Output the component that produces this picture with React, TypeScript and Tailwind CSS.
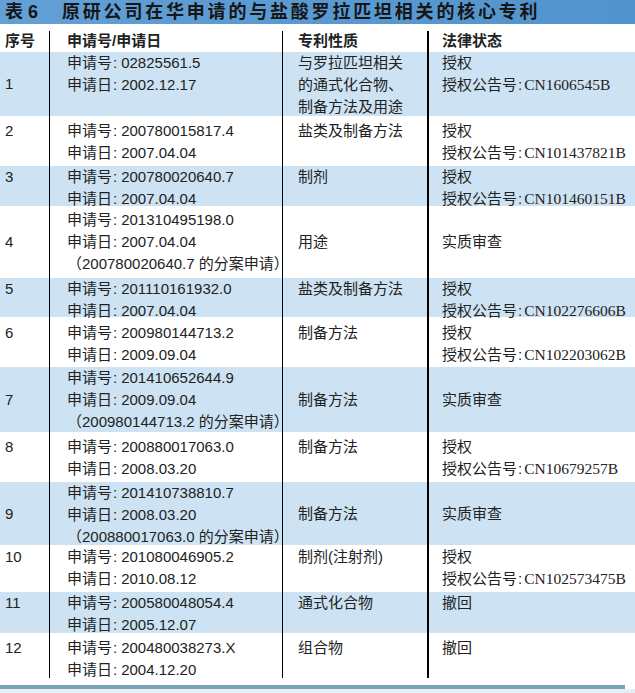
import React from "react";

type Row = {
  no: string;
  h: string;
  pt: string;
  blue: boolean;
  labelMid: boolean;
  mid: boolean;
  nums: string[];
  nature: string[];
  status: string[];
};

const rows: Row[] = [
  {
    no: "1", h: "h-[64px]", pt: "pt-0", blue: true, labelMid: true, mid: false,
    nums: ["申请号:02825561.5", "申请日:2002.12.17"],
    nature: ["与罗拉匹坦相关", "的通式化合物、", "制备方法及用途"],
    status: ["授权", "授权公告号:CN1606545B"],
  },
  {
    no: "2", h: "h-[50px]", pt: "pt-[4px]", blue: false, labelMid: false, mid: false,
    nums: ["申请号:200780015817.4", "申请日:2007.04.04"],
    nature: ["盐类及制备方法"],
    status: ["授权", "授权公告号:CN101437821B"],
  },
  {
    no: "3", h: "h-[40px]", pt: "pt-0", blue: true, labelMid: false, mid: false,
    nums: ["申请号:200780020640.7", "申请日:2007.04.04"],
    nature: ["制剂"],
    status: ["授权", "授权公告号:CN101460151B"],
  },
  {
    no: "4", h: "h-[72px]", pt: "pt-[3px]", blue: false, labelMid: true, mid: true,
    nums: ["申请号:201310495198.0", "申请日:2007.04.04", "（200780020640.7 的分案申请）"],
    nature: ["用途"],
    status: ["实质审查"],
  },
  {
    no: "5", h: "h-[39px]", pt: "pt-0", blue: true, labelMid: false, mid: false,
    nums: ["申请号:201110161932.0", "申请日:2007.04.04"],
    nature: ["盐类及制备方法"],
    status: ["授权", "授权公告号:CN102276606B"],
  },
  {
    no: "6", h: "h-[50px]", pt: "pt-[5px]", blue: false, labelMid: false, mid: false,
    nums: ["申请号:200980144713.2", "申请日:2009.09.04"],
    nature: ["制备方法"],
    status: ["授权", "授权公告号:CN102203062B"],
  },
  {
    no: "7", h: "h-[65px]", pt: "pt-0", blue: true, labelMid: true, mid: true,
    nums: ["申请号:201410652644.9", "申请日:2009.09.04", "（200980144713.2 的分案申请）"],
    nature: ["制备方法"],
    status: ["实质审查"],
  },
  {
    no: "8", h: "h-[50px]", pt: "pt-[4px]", blue: false, labelMid: false, mid: false,
    nums: ["申请号:200880017063.0", "申请日:2008.03.20"],
    nature: ["制备方法"],
    status: ["授权", "授权公告号:CN10679257B"],
  },
  {
    no: "9", h: "h-[63px]", pt: "pt-0", blue: true, labelMid: true, mid: true,
    nums: ["申请号:201410738810.7", "申请日:2008.03.20", "（200880017063.0 的分案申请）"],
    nature: ["制备方法"],
    status: ["实质审查"],
  },
  {
    no: "10", h: "h-[47px]", pt: "pt-[1px]", blue: false, labelMid: false, mid: false,
    nums: ["申请号:201080046905.2", "申请日:2010.08.12"],
    nature: ["制剂(注射剂)"],
    status: ["授权", "授权公告号:CN102573475B"],
  },
  {
    no: "11", h: "h-[41px]", pt: "pt-0", blue: true, labelMid: false, mid: false,
    nums: ["申请号:200580048054.4", "申请日:2005.12.07"],
    nature: ["通式化合物"],
    status: ["撤回"],
  },
  {
    no: "12", h: "h-[45px]", pt: "pt-[4px]", blue: false, labelMid: false, mid: false,
    nums: ["申请号:200480038273.X", "申请日:2004.12.20"],
    nature: ["组合物"],
    status: ["撤回"],
  },
];

// "label:value" -> label, tight colon, value (serif for CN numbers)
function Line({ text }: { text: string }) {
  const i = text.indexOf(":");
  if (i < 0) return <div className="whitespace-nowrap">{text}</div>;
  const value = text.slice(i + 1);
  const serif = value.startsWith("CN");
  return (
    <div className="whitespace-nowrap">
      {text.slice(0, i)}
      <span className={serif ? "pl-[1px] pr-[2px]" : "pl-[1px] pr-[4px]"}>:</span>
      <span className={serif ? "font-['Liberation_Serif',serif] text-[15.5px]" : ""}>{value}</span>
    </div>
  );
}

function Cell({ lines, mid, pt, cls }: { lines: string[]; mid: boolean; pt: string; cls: string }) {
  return (
    <div className={`flex flex-col ${mid ? "justify-center" : `justify-start ${pt}`} ${cls}`}>
      {lines.map((l, k) => (
        <Line key={k} text={l} />
      ))}
    </div>
  );
}

export default function App() {
  return (
    <div className="w-[635px] h-[693px] overflow-hidden bg-white text-[#222] text-[15px] leading-[22px] font-['Liberation_Sans','Noto_Sans_CJK_SC',sans-serif]">
      {/* title bar */}
      <div className="h-[24px] flex items-center bg-gradient-to-r from-[#62a0d6] to-[#5193cd] text-[#161616] font-bold text-[18px] leading-[24px]">
        <span className="pl-[5px] w-[62px]">表 6</span>
        <span className="tracking-[2.8px]">原研公司在华申请的与盐酸罗拉匹坦相关的核心专利</span>
      </div>

      {/* header */}
      <div className="h-[28px] flex font-bold">
        <div className="w-[50px] mt-[7px] h-[21px] border-r border-black pl-[5px] leading-[19px]">序号</div>
        <div className="w-[233px] mt-[7px] h-[21px] border-r border-black pl-[17px] leading-[19px]">申请号/申请日</div>
        <div className="w-[146px] mt-[7px] h-[21px] border-r-2 border-black pl-[15px] leading-[19px]">专利性质</div>
        <div className="flex-1 mt-[7px] h-[21px] pl-[13px] leading-[19px]">法律状态</div>
      </div>

      {/* body */}
      {rows.map((r) => (
        <div key={r.no} className={`flex ${r.h} ${r.blue ? "bg-[#cde2f2]" : "bg-white"}`}>
          <Cell lines={[r.no]} mid={r.labelMid} pt={r.pt} cls="w-[50px] border-r border-black pl-[5px]" />
          <Cell lines={r.nums} mid={false} pt={r.pt} cls="w-[233px] border-r border-black pl-[17px]" />
          <Cell lines={r.nature} mid={r.mid} pt={r.pt} cls="w-[146px] border-r-2 border-black pl-[15px]" />
          <Cell lines={r.status} mid={r.mid} pt={r.pt} cls="flex-1 pl-[13px]" />
        </div>
      ))}

      {/* bottom rule */}
      <div className="h-[7px]" />
      <div className="h-[4px] mr-[10px] bg-[#7aa3b9]" />
      <div className="h-[4px] bg-[#e6eff4]" />
    </div>
  );
}
